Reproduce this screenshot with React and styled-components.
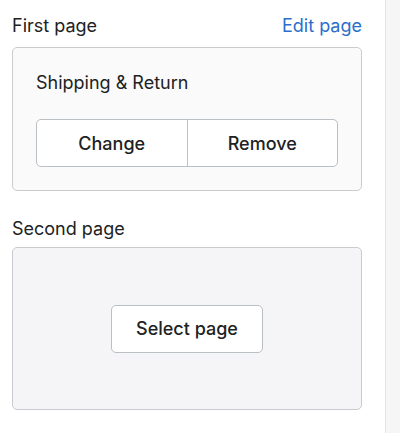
import React from "react";
import styled, { createGlobalStyle } from "styled-components";

const Global = createGlobalStyle`
  html, body { margin: 0; padding: 0; background: #ffffff; }
  body { font-family: Inter, "Liberation Sans", Arial, sans-serif; color: #202223; -webkit-font-smoothing: antialiased; }
  * { box-sizing: border-box; }
`;

const Page = styled.div`
  display: flex;
  width: 400px;
  height: 433px;
  overflow: hidden;
`;

const Main = styled.div`
  width: 385px;
  flex: none;
  padding: 14px 23px 0 12px;
  display: flex;
  flex-direction: column;
`;

const Strip = styled.div`
  flex: 1;
  background: #f6f6f7;
  border-left: 1px solid #e1e3e5;
`;

const Header = styled.div`
  display: flex;
  justify-content: space-between;
  align-items: center;
  height: 24px;
  margin-top: ${(p) => p.$top || 0}px;
  margin-bottom: ${(p) => p.$gap}px;
`;

const Label = styled.span`
  font-size: 18px;
  line-height: 24px;
  color: #202223;
`;

const Link = styled.a`
  font-size: 18px;
  line-height: 24px;
  color: #2c6ecb;
  text-decoration: none;
  cursor: pointer;
`;

const Card = styled.div`
  border: 1px solid #c9cccf;
  border-radius: 5px;
  background: ${(p) => p.$bg};
  padding: 23px;
  display: flex;
  flex-direction: column;
  gap: 24px;
  height: ${(p) => (p.$h ? `${p.$h}px` : "auto")};
  align-items: ${(p) => (p.$center ? "center" : "stretch")};
  justify-content: ${(p) => (p.$center ? "center" : "flex-start")};
`;

const Title = styled.div`
  font-size: 18px;
  line-height: 24px;
`;

const Group = styled.div`
  display: flex;
  border: 1px solid #babfc3;
  border-radius: 5px;
  background: #ffffff;
  overflow: hidden;
`;

const GroupButton = styled.button`
  flex: 1;
  height: 46px;
  border: none;
  background: transparent;
  font-family: inherit;
  font-size: 18px;
  font-weight: 500;
  color: #202223;
  & + & { border-left: 1px solid #babfc3; }
`;

const Button = styled.button`
  width: 152px;
  height: 48px;
  border: 1px solid #babfc3;
  border-radius: 5px;
  background: #ffffff;
  font-family: inherit;
  font-size: 18px;
  font-weight: 500;
  color: #202223;
`;

export default function App() {
  return (
    <>
      <Global />
      <Page>
        <Main>
          <Header $gap={9}>
            <Label>First page</Label>
            <Link>Edit page</Link>
          </Header>
          <Card $bg="#fafafb">
            <Title>Shipping &amp; Return</Title>
            <Group>
              <GroupButton>Change</GroupButton>
              <GroupButton>Remove</GroupButton>
            </Group>
          </Card>
          <Header $top={26} $gap={6}>
            <Label>Second page</Label>
          </Header>
          <Card $bg="#f5f5f7" $h={163} $center>
            <Button>Select page</Button>
          </Card>
        </Main>
        <Strip />
      </Page>
    </>
  );
}
